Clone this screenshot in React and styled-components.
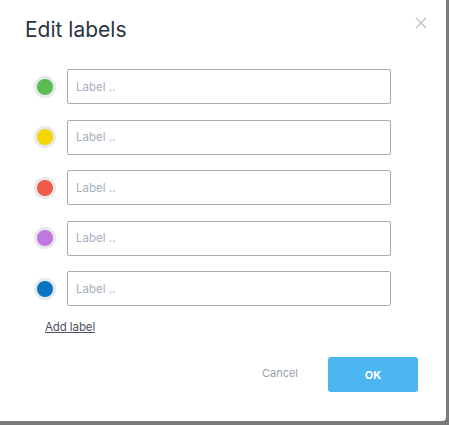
import styled, { createGlobalStyle } from 'styled-components';

const GlobalStyle = createGlobalStyle`
  html, body {
    margin: 0;
    padding: 0;
    background: #7a7a7a;
    font-family: Inter, "Noto Sans", sans-serif;
  }
`;

const COLORS = ['#5cbb52', '#f4d500', '#ef5a48', '#c176e0', '#0a73c2'];

const App = () => {
  return (
    <>
      <GlobalStyle />
      <Modal>
        <Header>
          <Title>Edit labels</Title>
          <CloseButton aria-label="Close">
            <svg width="12" height="12" viewBox="0 0 12 12">
              <path d="M1 1L11 11M11 1L1 11" stroke="#b6bec9" strokeWidth="1.2" />
            </svg>
          </CloseButton>
        </Header>
        <LabelList>
          {COLORS.map((c) => (
            <LabelRow key={c}>
              <Swatch $color={c} />
              <LabelInput placeholder="Label .." />
            </LabelRow>
          ))}
        </LabelList>
        <AddLabel>Add label</AddLabel>
        <Footer>
          <CancelButton>Cancel</CancelButton>
          <OkButton>OK</OkButton>
        </Footer>
      </Modal>
    </>
  );
};

const Modal = styled.div`
  width: 446px;
  height: 421px;
  box-sizing: border-box;
  background: #fff;
  border-radius: 0 0 4px 0;
  padding: 17px 0 0 25px;
`;

const Header = styled.div`
  display: flex;
  justify-content: space-between;
  align-items: flex-start;
  padding-right: 19px;
`;

const Title = styled.h1`
  margin: 0;
  font-size: 21px;
  font-weight: 400;
  line-height: 26px;
  color: #2a3342;
`;

const CloseButton = styled.button`
  border: 0;
  background: none;
  padding: 0;
  cursor: pointer;
  line-height: 0;
`;

const LabelList = styled.div`
  display: flex;
  flex-direction: column;
  gap: 15.5px;
  margin-top: 26px;
  padding-left: 9px;
`;

const LabelRow = styled.div`
  display: flex;
  align-items: center;
  gap: 11px;
`;

const Swatch = styled.span`
  width: 16px;
  height: 16px;
  border-radius: 50%;
  background: ${(p) => p.$color};
  border: 3px solid #e6e8ea;
  flex-shrink: 0;
`;

const LabelInput = styled.input`
  width: 324px;
  height: 35px;
  box-sizing: border-box;
  border: 1px solid #a3adb8;
  border-radius: 2px;
  padding: 0 8px;
  font-family: inherit;
  font-size: 11.5px;
  color: #2a3342;
  outline: none;
  &::placeholder {
    color: #a6b0be;
  }
`;

const AddLabel = styled.a`
  display: inline-block;
  margin: 14px 0 0 20px;
  font-size: 11.5px;
  letter-spacing: -0.1px;
  color: #4a5262;
  text-decoration: underline;
  cursor: pointer;
`;

const Footer = styled.div`
  display: flex;
  justify-content: flex-end;
  align-items: center;
  gap: 30px;
  margin-top: 22px;
  padding-right: 28px;
`;

const CancelButton = styled.button`
  border: 0;
  background: none;
  padding: 0 0 4px;
  font-family: inherit;
  font-size: 11px;
  color: #9aa2ae;
  cursor: pointer;
`;

const OkButton = styled.button`
  width: 90px;
  height: 35px;
  border: 0;
  border-radius: 3px;
  background: #4cb6f0;
  color: #fff;
  font-family: inherit;
  font-size: 11px;
  font-weight: 700;
  cursor: pointer;
`;

export default App;
